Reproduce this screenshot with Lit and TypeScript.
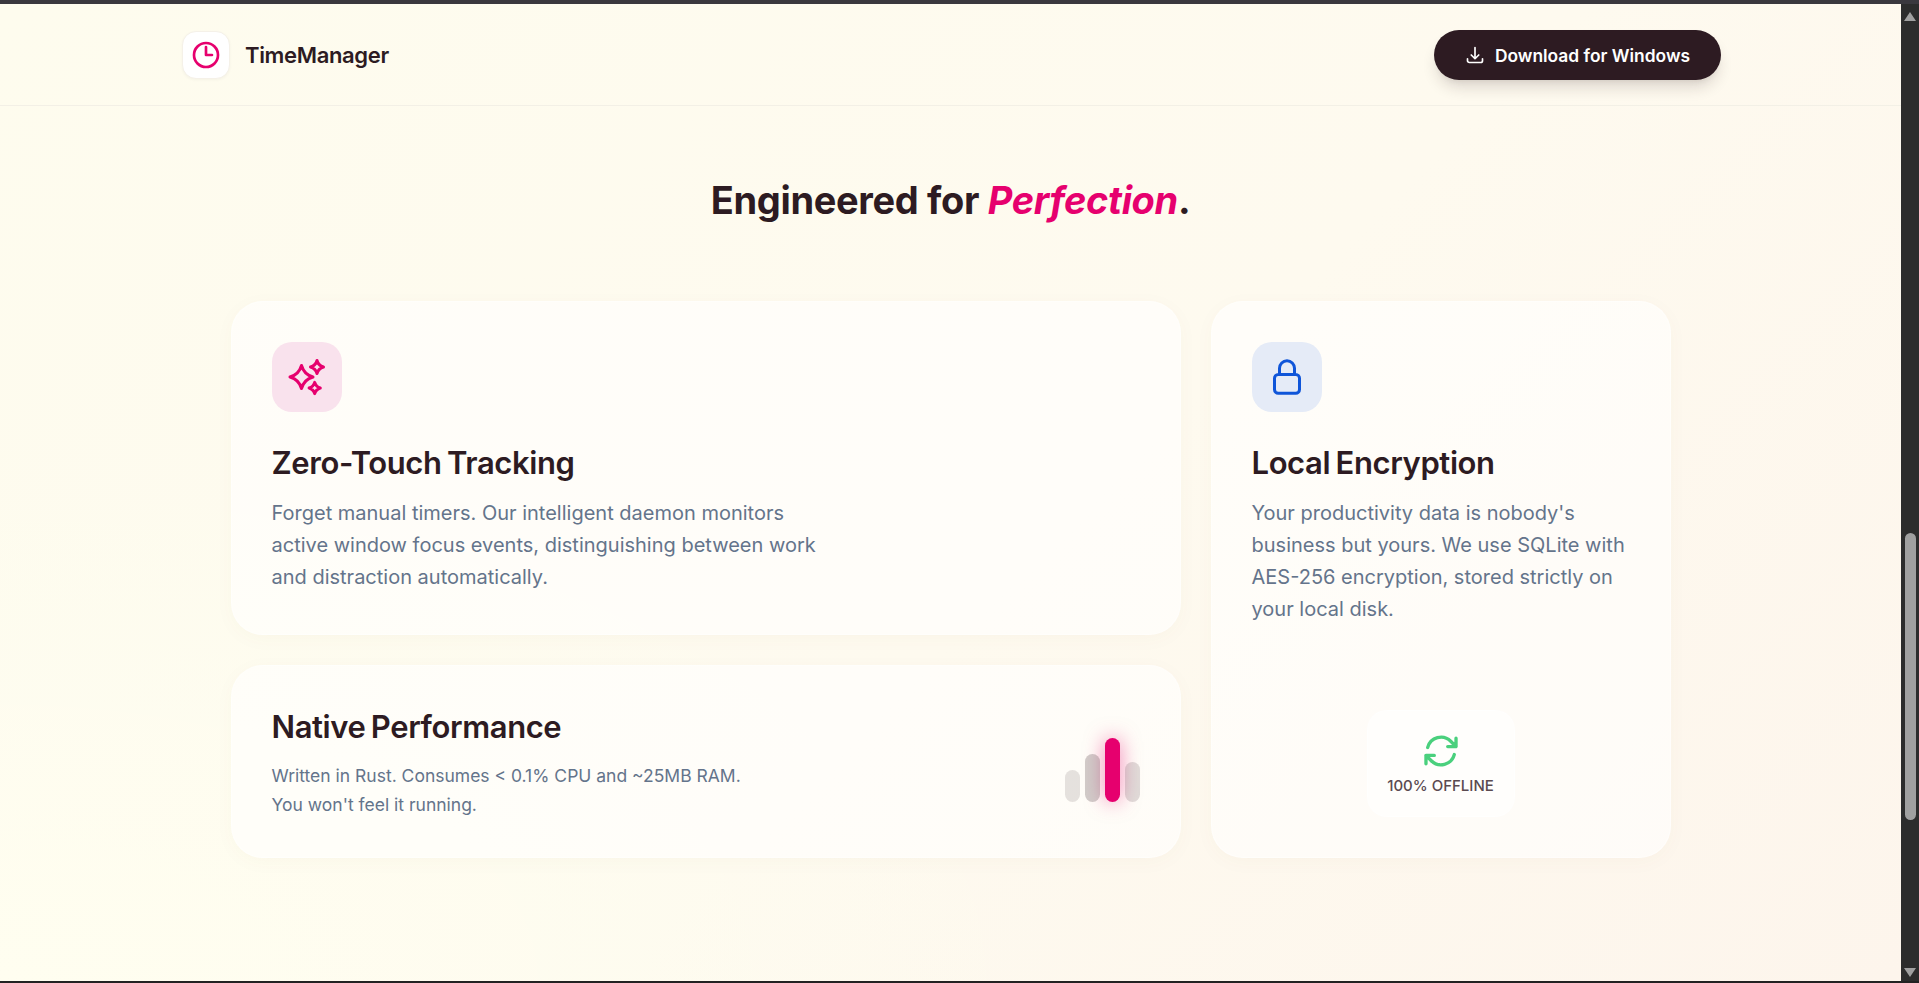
import { LitElement, html, css, svg } from 'lit';
import { customElement } from 'lit/decorators.js';

// four point star, used three times in the sparkle icon
const star = (x: number, y: number, r: number) => {
  const c = r * 0.22;
  return svg`<path d="M${x} ${y - r}Q${x + c} ${y - c} ${x + r} ${y}Q${x + c} ${y + c} ${x} ${y + r}Q${x - c} ${y + c} ${x - r} ${y}Q${x - c} ${y - c} ${x} ${y - r}Z"></path>`;
};

const BARS = [
  { h: 32, cls: 'faint' },
  { h: 48, cls: 'mid' },
  { h: 64, cls: 'hot' },
  { h: 40, cls: 'soft' },
];

@customElement('app-root')
export class AppRoot extends LitElement {
  static styles = css`
    :host {
      display: flex;
      flex-direction: column;
      height: 983px;
      overflow: hidden;
      background: #222;
      font-family: Inter, "Liberation Sans", sans-serif;
      color: #2d1b22;
    }
    .topline {
      height: 4px;
      flex: none;
      background: #3a383e;
    }
    .middle {
      flex: 1;
      min-height: 0;
      display: flex;
    }
    .page {
      flex: 1;
      min-width: 0;
      background:
        radial-gradient(ellipse at bottom left, #fffef0 0%, rgba(255, 254, 240, 0) 40%),
        linear-gradient(135deg, #fefcee 0%, #fefaef 55%, #fdf5ec 100%);
    }
    .bottomline {
      height: 2px;
      flex: none;
      background: #222;
    }

    /* scrollbar */
    .scrollbar {
      width: 18px;
      flex: none;
      background: #2c2c2c;
      display: flex;
      flex-direction: column;
      align-items: center;
      padding-top: 8px;
    }
    .arrow {
      width: 0;
      height: 0;
      border-left: 6px solid transparent;
      border-right: 6px solid transparent;
    }
    .arrow.up {
      border-bottom: 9px solid #a0a0a0;
    }
    .arrow.down {
      border-top: 9px solid #a0a0a0;
      margin-top: 148px;
    }
    .thumb {
      width: 11px;
      height: 287px;
      margin-top: 512px;
      border-radius: 6px;
      background: #a0a0a0;
    }

    /* header */
    .header {
      height: 102px;
      box-sizing: border-box;
      border-bottom: 1px solid #f3f0e6;
      display: flex;
      justify-content: center;
    }
    .header-inner {
      width: 1539px;
      margin-left: 2px;
      display: flex;
      align-items: center;
      justify-content: space-between;
      padding-top: 1px;
      box-sizing: border-box;
    }
    .brand {
      display: flex;
      align-items: center;
      gap: 15px;
    }
    .logo {
      width: 48px;
      height: 48px;
      border-radius: 14px;
      background: #fff;
      border: 1px solid #f5f1e8;
      box-sizing: border-box;
      box-shadow: 0 1px 3px rgba(0, 0, 0, 0.04);
      display: flex;
      align-items: center;
      justify-content: center;
      color: #e6006e;
    }
    .brand-name {
      font-size: 22px;
      font-weight: 600;
      letter-spacing: -0.35px;
    }
    .download {
      width: 287px;
      height: 50px;
      border: none;
      border-radius: 25px;
      background: #2d1b22;
      color: #fff;
      font: 600 17.4px Inter, "Liberation Sans", sans-serif;
      display: flex;
      align-items: center;
      justify-content: center;
      gap: 10px;
      box-shadow: 0 10px 15px -3px rgba(45, 27, 34, 0.16), 0 4px 6px -4px rgba(45, 27, 34, 0.1);
    }

    /* features */
    .heading {
      margin: 0;
      padding-top: 71px;
      text-align: center;
      font-size: 38px;
      line-height: 46px;
      font-weight: 700;
      letter-spacing: -0.35px;
    }
    .heading em {
      color: #e6006e;
      font-style: italic;
    }
    .grid {
      width: 1440px;
      margin: 78px auto 0;
      display: grid;
      grid-template-columns: repeat(3, 1fr);
      grid-template-rows: 334px 193px;
      gap: 30px;
    }
    .card {
      box-sizing: border-box;
      padding: 40px;
      border-radius: 32px;
      background: rgba(255, 255, 255, 0.6);
      border: 1px solid rgba(255, 255, 255, 0.4);
      box-shadow: 0 4px 20px rgba(120, 90, 40, 0.03);
    }
    .tracking {
      grid-column: span 2;
    }
    .encryption {
      grid-column: 3;
      grid-row: span 2;
      display: flex;
      flex-direction: column;
    }
    .performance {
      grid-column: span 2;
      display: flex;
      align-items: center;
      justify-content: space-between;
    }
    .icon-box {
      width: 70px;
      height: 70px;
      border-radius: 20px;
      display: flex;
      align-items: center;
      justify-content: center;
      margin-bottom: 29px;
    }
    .icon-box.pink {
      background: #f9e2ed;
      color: #e6006e;
    }
    .icon-box.blue {
      background: #e5ebf7;
      color: #0f55d9;
    }
    h3 {
      margin: 0 0 12px;
      font-size: 31px;
      line-height: 44px;
      font-weight: 600;
      letter-spacing: -0.4px;
      word-spacing: -2px;
    }
    p {
      margin: 0;
      color: #64748b;
      font-size: 20px;
      line-height: 32px;
    }
    .tracking p {
      max-width: 560px;
    }
    .performance p {
      font-size: 17.5px;
      line-height: 29px;
    }
    .bars {
      height: 80px;
      display: flex;
      align-items: flex-end;
      gap: 5px;
    }
    .bar {
      width: 15px;
      border-radius: 8px;
      background: #2d1b22;
    }
    .bar.faint {
      opacity: 0.12;
    }
    .bar.mid {
      opacity: 0.22;
    }
    .bar.soft {
      opacity: 0.15;
    }
    .bar.hot {
      background: #e6006e;
      box-shadow: 0 0 20px rgba(230, 0, 110, 0.5);
    }
    .offline {
      margin: auto auto 0;
      width: 148px;
      height: 107px;
      box-sizing: border-box;
      border-radius: 20px;
      background: rgba(255, 255, 255, 0.5);
      border: 1px solid rgba(255, 255, 255, 0.5);
      display: flex;
      flex-direction: column;
      align-items: center;
      padding-top: 20px;
      gap: 5px;
      color: #4ad07d;
    }
    .offline span {
      color: #5a4a50;
      font-size: 15px;
      line-height: 20px;
      font-weight: 500;
    }
    svg {
      display: block;
      flex: none;
    }
  `;

  render() {
    return html`
      <div class="topline"></div>
      <div class="middle">
        <div class="page">
          <header class="header">
            <div class="header-inner">
              <div class="brand">
                <div class="logo">
                  <svg width="32" height="32" viewBox="0 0 24 24" fill="none" stroke="currentColor" stroke-width="2" stroke-linecap="round" stroke-linejoin="round"><path d="M12 6v6h4.5m4.5 0a9 9 0 1 1-18 0 9 9 0 0 1 18 0Z"></path></svg>
                </div>
                <span class="brand-name">TimeManager</span>
              </div>
              <button class="download">
                <svg width="20" height="20" viewBox="0 0 24 24" fill="none" stroke="currentColor" stroke-width="2" stroke-linecap="round" stroke-linejoin="round"><path d="M3 16.5v2.25A2.25 2.25 0 0 0 5.25 21h13.5A2.25 2.25 0 0 0 21 18.75V16.5M16.5 12 12 16.5m0 0L7.5 12m4.5 4.5V3"></path></svg>
                Download for Windows
              </button>
            </div>
          </header>

          <h2 class="heading">Engineered for <em>Perfection</em>.</h2>

          <div class="grid">
            <section class="card tracking">
              <div class="icon-box pink">
                <svg width="40" height="40" viewBox="0 0 40 40" fill="none" stroke="currentColor" stroke-width="3" stroke-linejoin="round">
                  ${star(14.5, 20, 11.5)}${star(30, 10, 6.5)}${star(27.7, 31, 5.6)}
                </svg>
              </div>
              <h3>Zero-Touch Tracking</h3>
              <p>Forget manual timers. Our intelligent daemon monitors active window focus events, distinguishing between work and distraction automatically.</p>
            </section>

            <section class="card encryption">
              <div class="icon-box blue">
                <svg width="40" height="40" viewBox="0 0 24 24" fill="none" stroke="currentColor" stroke-width="1.8" stroke-linecap="round" stroke-linejoin="round"><path d="M16.5 10.5V6.75a4.5 4.5 0 1 0-9 0v3.75m-.75 11.25h10.5a2.25 2.25 0 0 0 2.25-2.25v-6.75a2.25 2.25 0 0 0-2.25-2.25H6.75a2.25 2.25 0 0 0-2.25 2.25v6.75a2.25 2.25 0 0 0 2.25 2.25Z"></path></svg>
              </div>
              <h3>Local Encryption</h3>
              <p>Your productivity data is nobody's business but yours. We use SQLite with AES-256 encryption, stored strictly on your local disk.</p>
              <div class="offline">
                <svg width="40" height="40" viewBox="0 0 24 24" fill="none" stroke="currentColor" stroke-width="2" stroke-linecap="round" stroke-linejoin="round"><path d="M16.023 9.348h4.992v-.001M2.985 19.644v-4.992m0 0h4.992m-4.993 0 3.181 3.183a8.25 8.25 0 0 0 13.803-3.7M4.031 9.865a8.25 8.25 0 0 1 13.803-3.7l3.181 3.182m0-4.991v4.99"></path></svg>
                <span>100% OFFLINE</span>
              </div>
            </section>

            <section class="card performance">
              <div>
                <h3>Native Performance</h3>
                <p>Written in Rust. Consumes &lt; 0.1% CPU and ~25MB RAM.<br />You won't feel it running.</p>
              </div>
              <div class="bars">
                ${BARS.map((b) => html`<div class="bar ${b.cls}" style="height:${b.h}px"></div>`)}
              </div>
            </section>
          </div>
        </div>
        <div class="scrollbar">
          <div class="arrow up"></div>
          <div class="thumb"></div>
          <div class="arrow down"></div>
        </div>
      </div>
      <div class="bottomline"></div>
    `;
  }
}
